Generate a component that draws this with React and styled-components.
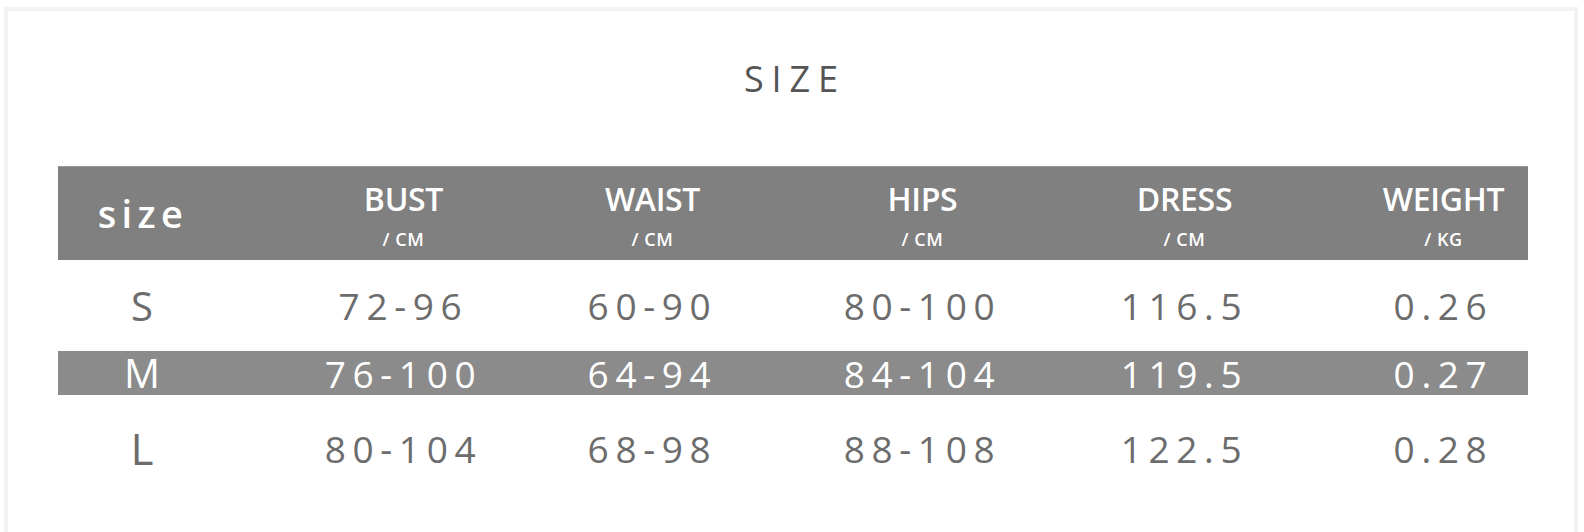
import React from "react";
import styled, { createGlobalStyle } from "styled-components";

const columns = [
  { title: "BUST", unit: "/ CM" },
  { title: "WAIST", unit: "/ CM" },
  { title: "HIPS", unit: "/ CM" },
  { title: "DRESS", unit: "/ CM" },
  { title: "WEIGHT", unit: "/ KG" },
];

const rows = [
  { size: "S", values: ["72-96", "60-90", "80-100", "116.5", "0.26"], height: 91 },
  { size: "M", values: ["76-100", "64-94", "84-104", "119.5", "0.27"], height: 44, shaded: true },
  { size: "L", values: ["80-104", "68-98", "88-108", "122.5", "0.28"], height: 106 },
];

const Global = createGlobalStyle`
  html, body {
    margin: 0;
    background: #ffffff;
    font-family: "Open Sans", "Liberation Sans", sans-serif;
  }
`;

const Frame = styled.div`
  margin: 7px 6px 0 4px;
  height: 525px;
  box-sizing: border-box;
  border: 4px solid #f2f2f2;
  border-bottom: none;
  background: #fff;
  overflow: hidden;
`;

const Title = styled.h1`
  margin: 0;
  height: 155px;
  padding: 0 0 20px 0.22em;
  display: flex;
  align-items: center;
  justify-content: center;
  box-sizing: border-box;
  font-size: 36px;
  font-weight: 400;
  letter-spacing: 0.22em;
  color: #555;
  line-height: 1;
`;

const Table = styled.div`
  margin: 0 46px 0 50px;
`;

// track widths tuned so each column's text sits where the original chart puts it
const Row = styled.div`
  display: grid;
  grid-template-columns: 168px 259px 239px 301px 223px 295px;
  align-items: center;
  height: ${(p) => p.$height}px;
  background: ${(p) => (p.$shaded ? "#8b8b8b" : "transparent")};
  color: ${(p) => (p.$shaded ? "#fff" : "#6c6c6c")};
`;

const HeadRow = styled(Row)`
  height: 94px;
  background: #808080;
  border-top: 1px solid #9a9a9a;
  box-sizing: border-box;
  color: #fff;
`;

const SizeLabel = styled.div`
  text-align: center;
  padding-left: 2px;
  font-size: 38px;
  font-weight: 600;
  letter-spacing: 0.14em;
  line-height: 1;
  margin-top: -2px;
`;

const HeadCell = styled.div`
  display: flex;
  flex-direction: column;
  align-items: center;
  padding-left: 96px;
  margin-top: 4px;
  white-space: nowrap;
`;

const HeadTitle = styled.span`
  font-size: 32px;
  font-weight: 600;
  line-height: 1;
  letter-spacing: -0.01em;
`;

const HeadUnit = styled.span`
  margin-top: 15px;
  font-size: 18px;
  font-weight: 600;
  line-height: 1;
  letter-spacing: 0.03em;
`;

const SizeCell = styled.div`
  text-align: center;
  font-size: ${(p) => (p.$big ? 44 : 40)}px;
  font-weight: 400;
  line-height: 1;
`;

const Value = styled.div`
  display: flex;
  justify-content: center;
  padding-left: 96px;
  white-space: nowrap;
  font-size: 37px;
  font-weight: 400;
  letter-spacing: 0.18em;
  line-height: 1;
`;

export default function App() {
  return (
    <>
      <Global />
      <Frame>
        <Title>SIZE</Title>
        <Table>
          <HeadRow>
            <SizeLabel>size</SizeLabel>
            {columns.map((c) => (
              <HeadCell key={c.title}>
                <HeadTitle>{c.title}</HeadTitle>
                <HeadUnit>{c.unit}</HeadUnit>
              </HeadCell>
            ))}
          </HeadRow>
          {rows.map((r) => (
            <Row key={r.size} $height={r.height} $shaded={r.shaded}>
              <SizeCell $big={r.size === "L"}>{r.size}</SizeCell>
              {r.values.map((v, i) => (
                <Value key={i}>{v}</Value>
              ))}
            </Row>
          ))}
        </Table>
      </Frame>
    </>
  );
}
